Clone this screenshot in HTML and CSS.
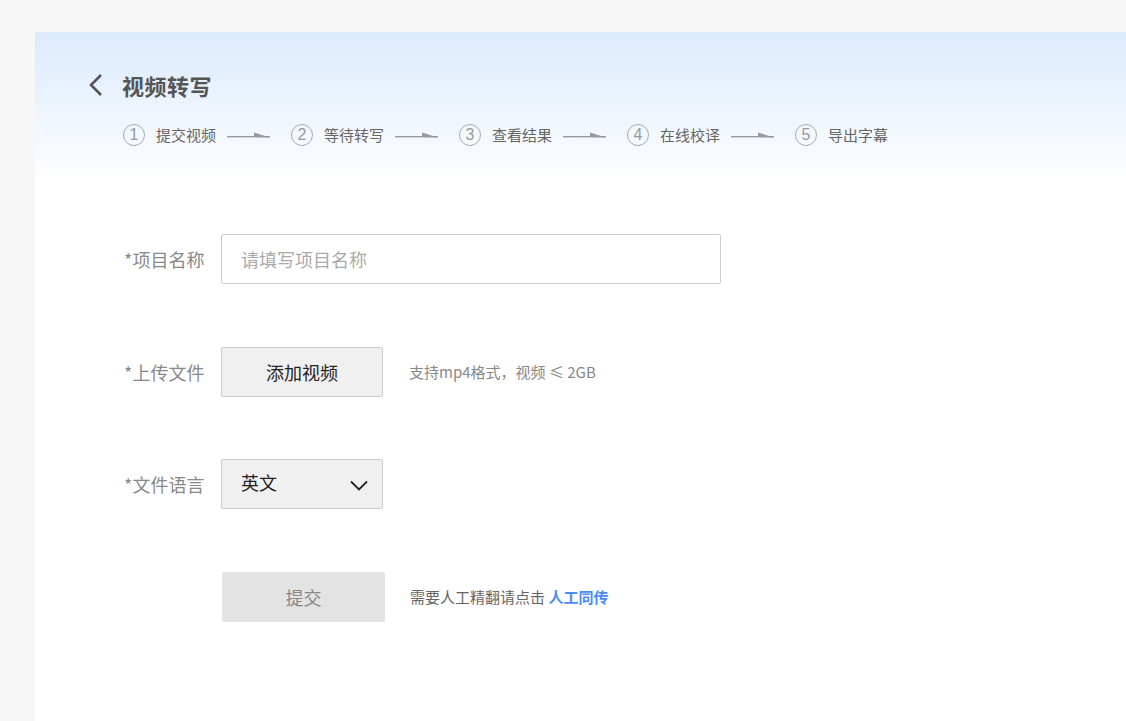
FILE: index.html
```html
<!DOCTYPE html>
<html lang="zh-CN">
<head>
<meta charset="utf-8">
<title>视频转写</title>
<link rel="stylesheet" href="styles.css">
</head>
<body>
<div class="page">
  <main class="card">
    <header class="head">
      <div class="title-row">
        <svg class="back" width="16" height="24" viewBox="0 0 16 24"><polyline points="13,2 3,12 13,22" fill="none" stroke="#555" stroke-width="2.6" stroke-linejoin="miter"/></svg>
        <h1 class="title">视频转写</h1>
      </div>
      <ol class="steps">
        <li class="step"><span class="num">1</span><span class="label">提交视频</span></li>
        <li class="arrow"><svg width="43" height="8" viewBox="0 0 43 8"><rect x="0" y="5" width="43" height="1.4" fill="#999"/><polygon points="27,1.5 27,6 43,6.4" fill="#999"/></svg></li>
        <li class="step"><span class="num">2</span><span class="label">等待转写</span></li>
        <li class="arrow"><svg width="43" height="8" viewBox="0 0 43 8"><rect x="0" y="5" width="43" height="1.4" fill="#999"/><polygon points="27,1.5 27,6 43,6.4" fill="#999"/></svg></li>
        <li class="step"><span class="num">3</span><span class="label">查看结果</span></li>
        <li class="arrow"><svg width="43" height="8" viewBox="0 0 43 8"><rect x="0" y="5" width="43" height="1.4" fill="#999"/><polygon points="27,1.5 27,6 43,6.4" fill="#999"/></svg></li>
        <li class="step"><span class="num">4</span><span class="label">在线校译</span></li>
        <li class="arrow"><svg width="43" height="8" viewBox="0 0 43 8"><rect x="0" y="5" width="43" height="1.4" fill="#999"/><polygon points="27,1.5 27,6 43,6.4" fill="#999"/></svg></li>
        <li class="step"><span class="num">5</span><span class="label">导出字幕</span></li>
      </ol>
    </header>

    <form class="form">
      <div class="row">
        <label class="field-label">*项目名称</label>
        <input class="text-input" type="text" placeholder="请填写项目名称">
      </div>
      <div class="row">
        <label class="field-label">*上传文件</label>
        <button type="button" class="btn">添加视频</button>
        <span class="hint">支持mp4格式，视频 ≤ 2GB</span>
      </div>
      <div class="row">
        <label class="field-label">*文件语言</label>
        <div class="select">
          <span class="select-value">英文</span>
          <svg class="caret" width="18" height="11" viewBox="0 0 18 11"><polyline points="1,1.5 9,9.5 17,1.5" fill="none" stroke="#222" stroke-width="1.8"/></svg>
        </div>
      </div>
      <div class="row submit-row">
        <button type="button" class="btn-submit">提交</button>
        <span class="hint hint-dark">需要人工精翻请点击 <a class="link" href="#">人工同传</a></span>
      </div>
    </form>
  </main>
</div>
</body>
</html>
```

FILE: styles.css
```css
* { box-sizing: border-box; }
html, body { margin: 0; padding: 0; }
body {
  background: #f7f7f7;
  font-family: "Noto Sans CJK SC", "Noto Sans", sans-serif;
  height: 721px;
  overflow: hidden;
}
.page {
  padding: 32px 0 0 35px;
  height: 721px;
}
.card {
  height: 100%;
  background: linear-gradient(180deg, #dbeafc 0px, #eef5fe 80px, #ffffff 150px);
  padding: 41px 0 0 53px;
}
.title-row {
  display: flex;
  align-items: center;
  gap: 18px;
  height: 24px;
}
.back { display: block; }
.title {
  margin: 0;
  font-size: 22px;
  font-weight: 700;
  color: #555;
  line-height: 24px;
  letter-spacing: 0.5px;
}
.steps {
  list-style: none;
  margin: 27px 0 0 35px;
  padding: 0;
  display: flex;
  align-items: center;
  height: 22px;
}
.step {
  display: flex;
  align-items: center;
}
.num {
  width: 22px;
  height: 22px;
  border: 1px solid #aaa;
  border-radius: 50%;
  display: flex;
  align-items: center;
  justify-content: center;
  font-family: "Liberation Sans", sans-serif;
  font-size: 16px;
  color: #999;
  line-height: 1;
}
.label {
  margin-left: 11px;
  font-size: 15px;
  color: #666;
  line-height: 22px;
}
.arrow {
  margin: 0 21px 0 11px;
  display: flex;
  align-items: center;
  height: 22px;
}
.arrow svg { display: block; }

.form {
  margin: 88px 0 0 36px;
  display: flex;
  flex-direction: column;
  gap: 62.6px;
}
.row {
  display: flex;
  align-items: center;
  height: 50px;
}
.field-label {
  width: 97px;
  font-size: 18px;
  color: #888;
  flex: none;
}
.text-input {
  width: 500px;
  height: 50px;
  border: 1px solid #ccc;
  border-radius: 2px;
  background: #fff;
  padding: 0 19px;
  font-family: inherit;
  font-size: 18px;
  color: #333;
  outline: none;
}
.text-input::placeholder { color: #aaa; }
.btn {
  width: 162px;
  height: 50px;
  background: #f0f0f0;
  border: 1px solid #ccc;
  border-radius: 2px;
  font-family: inherit;
  font-size: 18px;
  color: #222;
  padding: 0;
}
.hint {
  margin-left: 26px;
  font-size: 15px;
  color: #888;
}
.select {
  width: 162px;
  height: 50px;
  background: #f0f0f0;
  border: 1px solid #ccc;
  border-radius: 2px;
  display: flex;
  align-items: center;
  justify-content: space-between;
  padding: 0 14px 0 19px;
}
.select-value {
  font-size: 18px;
  color: #222;
  margin-top: -4px;
}
.caret { display: block; margin-top: 2px; }
.submit-row { padding-left: 98px; }
.btn-submit {
  width: 163px;
  height: 50px;
  background: #e3e3e3;
  border: none;
  border-radius: 2px;
  font-family: inherit;
  font-size: 18px;
  color: #888;
  padding: 0;
}
.hint-dark {
  margin-left: 25px;
  font-size: 15px;
  color: #666;
}
.link {
  color: #4a8cf7;
  font-weight: 700;
  text-decoration: none;
}
```
